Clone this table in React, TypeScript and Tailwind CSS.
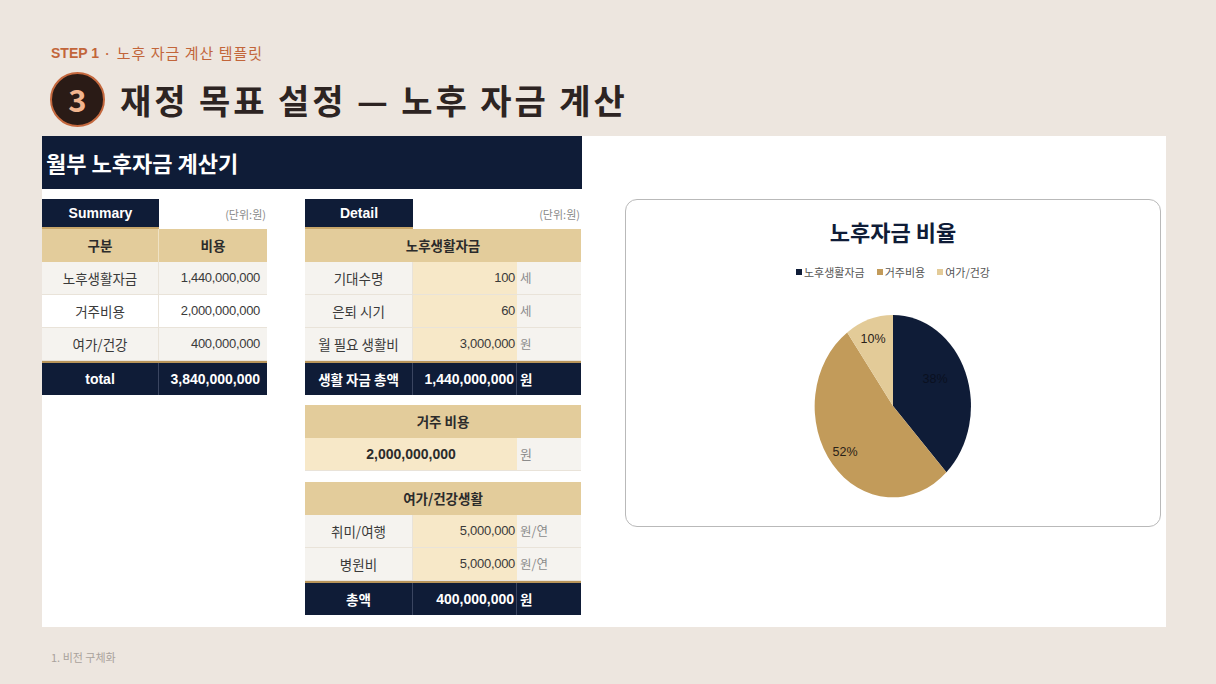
import React from "react";

const KR = { fontFamily: '"Noto Sans CJK KR", "Noto Sans", sans-serif' };
const MIX = { fontFamily: '"Liberation Sans", "Noto Sans CJK KR", sans-serif' };

const NAVY = "bg-[#0f1c37]";

function SummaryTable() {
  const rows = [
    { k: "노후생활자금", v: "1,440,000,000", bg: "bg-[#f5f3ef]" },
    { k: "거주비용", v: "2,000,000,000", bg: "bg-white" },
    { k: "여가/건강", v: "400,000,000", bg: "bg-[#f5f3ef]" },
  ];
  return (
    <div className="w-[225px] flex flex-col" style={MIX}>
      <div className="flex h-[30px] items-center">
        <div className={`w-[117px] h-full ${NAVY} text-white font-bold text-[14px] flex items-center justify-center border-b-2 border-[#c8a66a]`}>
          Summary
        </div>
        <div className="flex-1 text-right text-[11px] text-[#8a8a8a] pr-[1px]" style={KR}>(단위:원)</div>
      </div>
      <div className="flex h-[33px] bg-[#e3cc9b] text-[#2b2b2b] font-bold text-[13.5px]" style={KR}>
        <div className="w-[117px] flex items-center justify-center border-r border-[#efe2c4]">구분</div>
        <div className="flex-1 flex items-center justify-center">비용</div>
      </div>
      {rows.map((r) => (
        <div key={r.k} className={`flex h-[33px] ${r.bg} border-b border-[#e9e3d9] text-[#3a3a3a]`}>
          <div className="w-[117px] flex items-center justify-center text-[13.5px] border-r border-[#e9e3d9]" style={KR}>{r.k}</div>
          <div className="flex-1 flex items-center justify-end pr-[7px] text-[13px] tracking-[-0.3px]">{r.v}</div>
        </div>
      ))}
      <div className={`flex h-[34px] ${NAVY} text-white font-bold border-t-2 border-[#b8955a]`}>
        <div className="w-[117px] flex items-center justify-center text-[14px] border-r border-[#3a4560]">total</div>
        <div className="flex-1 flex items-center justify-end pr-[7px] text-[14px]">3,840,000,000</div>
      </div>
    </div>
  );
}

function GoldHead({ children }: { children: React.ReactNode }) {
  return (
    <div className="h-[33px] bg-[#e3cc9b] flex items-center justify-center font-bold text-[13.5px] text-[#2b2b2b]" style={KR}>
      {children}
    </div>
  );
}

function DRow({ k, v, u }: { k: string; v: string; u: string }) {
  return (
    <div className="flex h-[33px] border-b border-[#e9e3d9] text-[#3a3a3a]">
      <div className="w-[108px] bg-[#f5f3ef] flex items-center justify-center text-[13.5px] border-r border-[#e9e3d9]" style={KR}>{k}</div>
      <div className="w-[104px] bg-[#f7e8c8] flex items-center justify-end pr-[2px] text-[13px] tracking-[-0.3px]">{v}</div>
      <div className="flex-1 bg-[#f5f3ef] flex items-center pl-[3px] text-[12.5px] text-[#8c8c8c]" style={KR}>{u}</div>
    </div>
  );
}

function DTotal({ k, v }: { k: string; v: string }) {
  return (
    <div className={`flex h-[34px] ${NAVY} text-white font-bold border-t-2 border-[#b8955a]`}>
      <div className="w-[108px] flex items-center justify-center text-[13.5px] border-r border-[#3a4560]" style={KR}>{k}</div>
      <div className="w-[104px] flex items-center justify-end pr-[2px] text-[14px] border-r border-[#3a4560]">{v}</div>
      <div className="flex-1 flex items-center pl-[3px] text-[13.5px]" style={KR}>원</div>
    </div>
  );
}

function DetailTable() {
  return (
    <div className="w-[276px] flex flex-col" style={MIX}>
      <div className="flex h-[30px] items-center">
        <div className={`w-[108px] h-full ${NAVY} text-white font-bold text-[14px] flex items-center justify-center border-b-2 border-[#c8a66a]`}>
          Detail
        </div>
        <div className="flex-1 text-right text-[11px] text-[#8a8a8a] pr-[1px]" style={KR}>(단위:원)</div>
      </div>
      <GoldHead>노후생활자금</GoldHead>
      <DRow k="기대수명" v="100" u="세" />
      <DRow k="은퇴 시기" v="60" u="세" />
      <DRow k="월 필요 생활비" v="3,000,000" u="원" />
      <DTotal k="생활 자금 총액" v="1,440,000,000" />

      <div className="mt-[10px]">
        <GoldHead>거주 비용</GoldHead>
        <div className="flex h-[33px] border-b border-[#e9e3d9]">
          <div className="w-[212px] bg-[#f7e8c8] flex items-center justify-center font-bold text-[14px] text-[#2b2b2b]">2,000,000,000</div>
          <div className="flex-1 bg-[#f5f3ef] flex items-center pl-[3px] text-[13px] text-[#8c8c8c]" style={KR}>원</div>
        </div>
      </div>

      <div className="mt-[11px]">
        <GoldHead>여가/건강생활</GoldHead>
        <DRow k="취미/여행" v="5,000,000" u="원/연" />
        <DRow k="병원비" v="5,000,000" u="원/연" />
        <DTotal k="총액" v="400,000,000" />
      </div>
    </div>
  );
}

function PieCard() {
  return (
    <div className="w-[536px] h-[328px] mt-[63px] border-[1.5px] border-[#b9b9b9] rounded-[12px] flex flex-col items-center bg-white">
      <div className="mt-[15px] text-[22px] font-bold text-[#0f1c37] leading-[32px]" style={KR}>노후자금 비율</div>
      <div className="mt-[17px] flex items-center gap-[12px] text-[11px] text-[#555] leading-[16px]" style={KR}>
        <span className="flex items-center gap-[2px]"><span className="w-[6px] h-[6px] bg-[#0f1c37] inline-block" />노후생활자금</span>
        <span className="flex items-center gap-[2px]"><span className="w-[6px] h-[6px] bg-[#c29b5a] inline-block" />거주비용</span>
        <span className="flex items-center gap-[2px]"><span className="w-[6px] h-[6px] bg-[#e3cb98] inline-block" />여가/건강</span>
      </div>
      <svg width="180" height="190" viewBox="0 0 180 190" className="mt-[31px]">
        <path d="M90,95 L90,4 A78,91 0 0 1 143.4,161.3 Z" fill="#0f1c37" />
        <path d="M90,95 L143.4,161.3 A78,91 0 1 1 44.2,21.4 Z" fill="#c29b5a" />
        <path d="M90,95 L44.2,21.4 A78,91 0 0 1 90,4 Z" fill="#e3cb98" />
        <text x="132" y="72" textAnchor="middle" fontSize="12.5" fill="#0a1020" fontFamily="Liberation Sans, sans-serif">38%</text>
        <text x="42" y="145" textAnchor="middle" fontSize="12.5" fill="#2a2218" fontFamily="Liberation Sans, sans-serif">52%</text>
        <text x="70" y="32" textAnchor="middle" fontSize="12.5" fill="#2a2218" fontFamily="Liberation Sans, sans-serif">10%</text>
      </svg>
    </div>
  );
}

export default function App() {
  return (
    <div className="w-[1216px] h-[684px] bg-[#ede6df] flex flex-col overflow-hidden">
      <div className="pl-[51px] pt-[43px] h-[20px] box-content flex items-center text-[14px] text-[#c2653a]" style={MIX}>
        <span className="font-bold">STEP 1</span>
        <span className="ml-[4px] text-[15px] tracking-[1px]" style={KR}>· 노후 자금 계산 템플릿</span>
      </div>
      <div className="pl-[50px] mt-[9px] flex items-center h-[55px]">
        <div className="w-[55px] h-[55px] rounded-full bg-[#2a1b16] border-2 border-[#c4683e] flex items-center justify-center text-[#f1b58f] text-[31px] font-bold" style={KR}>
          3
        </div>
        <div className="ml-[15px] text-[34px] font-bold text-[#2d2422] tracking-[2.9px] leading-none" style={KR}>
          재정 목표 설정 — 노후 자금 계산
        </div>
      </div>
      <div className="ml-[42px] mt-[9px] w-[1124px] h-[491px] bg-white flex">
        <div className="w-[540px] flex flex-col">
          <div className={`h-[53px] ${NAVY} flex items-center pl-[4px] text-white text-[22px] font-bold`} style={KR}>
            월부 노후자금 계산기
          </div>
          <div className="mt-[10px] flex gap-[38px] items-start">
            <SummaryTable />
            <DetailTable />
          </div>
        </div>
        <div className="pl-[43px]">
          <PieCard />
        </div>
      </div>
      <div className="pl-[51px] mt-[22px] text-[11px] text-[#a9a29c]" style={KR}>1. 비전 구체화</div>
    </div>
  );
}
